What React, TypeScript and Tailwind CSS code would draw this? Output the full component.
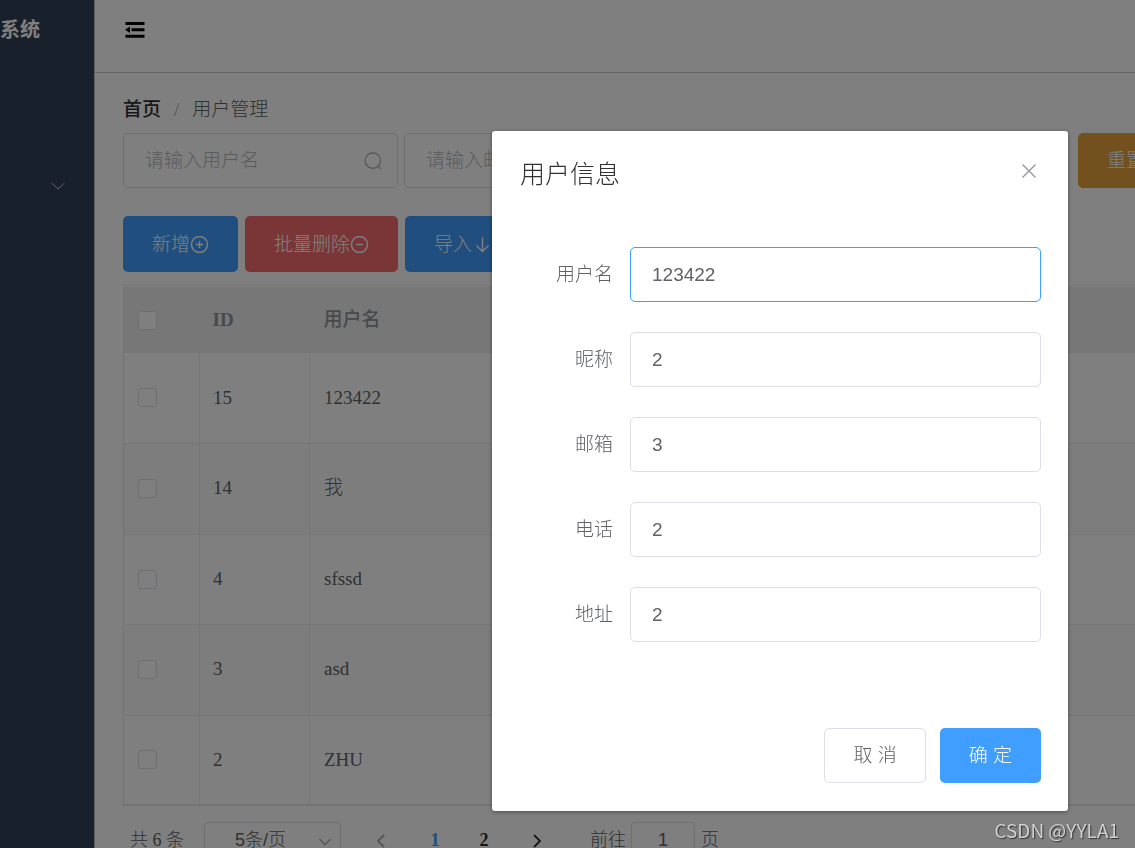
import React, { useState } from "react";

type User = { id: number; username: string };

const users: User[] = [
  { id: 15, username: "123422" },
  { id: 14, username: "我" },
  { id: 4, username: "sfssd" },
  { id: 3, username: "asd" },
  { id: 2, username: "ZHU" },
];

const fields = [
  { key: "username", label: "用户名" },
  { key: "nickname", label: "昵称" },
  { key: "email", label: "邮箱" },
  { key: "phone", label: "电话" },
  { key: "address", label: "地址" },
];

const sans = "font-['Liberation_Sans','Noto_Sans_CJK_SC',sans-serif]";
const button = `flex shrink-0 items-center rounded-[5px] px-[29px] pt-[2px] text-[19px] font-light text-white ${sans}`;

const Chevron = ({ d, className }: { d: string; className: string }) => (
  <svg viewBox="0 0 16 16" fill="none" stroke="currentColor" className={className}>
    <path d={d} />
  </svg>
);

const FoldIcon = () => (
  <svg viewBox="0 0 20 16" fill="currentColor" className="h-4 w-5">
    <path d="M0.5 0h19v3h-19zM6.5 6.2h13v3h-13zM0.5 12.7h19v3h-19zM0 7.7l5-3.2v6.4z" />
  </svg>
);

const SearchIcon = () => (
  <svg viewBox="0 0 18 18" fill="none" stroke="currentColor" strokeWidth="1.2" className="h-[18px] w-[18px]">
    <circle cx="8.8" cy="8.6" r="7.7" />
    <path d="M14 14.2l3 2.6" />
  </svg>
);

const CircleIcon = ({ plus }: { plus?: boolean }) => (
  <svg viewBox="0 0 19 19" fill="none" stroke="currentColor" strokeWidth="1.4" className="h-[19px] w-[19px]">
    <circle cx="9.5" cy="8.5" r="8" />
    <path d={plus ? "M6 8.5h7M9.5 5v7" : "M6 8.5h7"} />
  </svg>
);

const ArrowDownIcon = () => (
  <svg viewBox="0 0 19 19" fill="none" stroke="currentColor" strokeWidth="1.4" className="h-[19px] w-[19px]">
    <path d="M10.5 1.5v14M4.5 9.5l6 6 6-6" />
  </svg>
);

const Checkbox = ({ label }: { label: string }) => (
  <input
    type="checkbox"
    aria-label={label}
    className="block h-[19px] w-[19px] appearance-none rounded-[3px] border border-[#dcdfe6] bg-white checked:bg-[#409eff]"
  />
);

const SearchInput = ({ placeholder }: { placeholder: string }) => (
  <div className="flex h-[55px] w-[275px] shrink-0 items-center rounded-[5px] border border-[#dcdfe6] bg-white pl-[21px] pr-[15px] text-[#a8abb2]">
    <input
      aria-label={placeholder}
      placeholder={placeholder}
      className={`min-w-0 flex-1 pt-[2px] text-[19px] font-light outline-none placeholder:text-[#b4b8c0] ${sans}`}
    />
    <SearchIcon />
  </div>
);

const Sidebar = () => (
  <aside className="flex w-[95px] shrink-0 flex-col overflow-hidden border-r border-[#c0c4cc] bg-[#304156] text-white">
    <div className="flex h-[60px] items-center justify-end pr-[54px]">
      <b className={`whitespace-nowrap text-[20px] ${sans}`}>系统</b>
    </div>
    <button aria-label="展开菜单" className="mt-[90px] flex h-[72px] items-center justify-end pr-7 text-[#c0c4cc]">
      <Chevron d="M1.5 5l6.5 6 6.5-6" className="h-4 w-4" />
    </button>
  </aside>
);

const UserTable = () => (
  <div className="border-t border-[#ebeef5] pt-px">
    <table className="w-full table-fixed border-collapse text-left text-[19px] text-[#606266]">
      <thead>
        <tr className="h-[66px] border-l border-[#ebeef5] bg-[#eee] text-[#909399]">
          <th className="w-[76px] pl-[14px]">
            <Checkbox label="全选" />
          </th>
          <th className="w-[110px] px-[13px]">ID</th>
          <th className="px-[14px] font-medium">用户名</th>
        </tr>
      </thead>
      <tbody className="border-b-2 border-l border-[#e4e7ed]">
        {users.map((user) => (
          <tr key={user.id} className="h-[90px] even:h-[91px] even:bg-[#fafafa]">
            <td className="border-r border-b border-[#ebeef5] pl-[14px]">
              <Checkbox label={`选择 ${user.username}`} />
            </td>
            <td className="border-r border-b border-[#ebeef5] px-[13px]">{user.id}</td>
            <td className="border-b border-[#ebeef5] px-[14px] font-light">{user.username}</td>
          </tr>
        ))}
      </tbody>
    </table>
  </div>
);

const Pagination = () => (
  <div className="flex items-center pl-[7px] pt-4 text-[18px] font-light text-[#606266]">
    <span className="w-[74px]">共 6 条</span>
    <div className="relative">
      <select
        aria-label="每页条数"
        className={`h-[37px] w-[137px] appearance-none rounded-[4px] border border-[#dcdfe6] bg-white pl-[30px] text-[18px] font-light ${sans}`}
      >
        <option>5条/页</option>
        <option>10条/页</option>
      </select>
      <Chevron d="M2.5 5l5.5 5.5L13.5 5" className="pointer-events-none absolute right-2 top-3 h-4 w-4 stroke-[1.3] text-[#a8abb2]" />
    </div>
    <button aria-label="上一页" className="ml-8 text-[#a8abb2]">
      <Chevron d="M11 2L5 8l6 6" className="h-4 w-4 stroke-[1.8]" />
    </button>
    <button className="ml-[41px] w-[10px] font-bold text-[#409eff]">1</button>
    <button className="ml-[39px] w-[10px] font-bold text-[#303133]">2</button>
    <button aria-label="下一页" className="ml-10 text-[#303133]">
      <Chevron d="M5 2l6 6-6 6" className="h-4 w-4 stroke-[1.8]" />
    </button>
    <label htmlFor="page" className="ml-[45px]">前往</label>
    <input
      id="page"
      defaultValue="1"
      className={`ml-[5px] mr-[6px] h-[37px] w-[64px] rounded-[4px] border border-[#dcdfe6] text-center text-[18px] ${sans}`}
    />
    <span>页</span>
  </div>
);

const UserDialog = ({ onClose }: { onClose: () => void }) => {
  const [form, setForm] = useState<Record<string, string>>({
    username: "123422",
    nickname: "2",
    email: "3",
    phone: "2",
    address: "2",
  });

  return (
    <div className="fixed inset-0 flex items-start justify-end bg-black/50 pt-[131px] pr-[67px]">
      <div
        role="dialog"
        aria-labelledby="dialog-title"
        className="w-[576px] rounded-[3px] bg-white pr-[27px] pb-7 pl-7 shadow-[0_1px_4px_rgba(0,0,0,0.4)]"
      >
        <div className="flex h-[88px] items-center justify-between pr-1">
          <h2 id="dialog-title" className="text-[25px] font-light text-[#303133]">
            用户信息
          </h2>
          <button aria-label="关闭" onClick={onClose} className="pb-2 text-[#909399]">
            <Chevron d="M1.5 1.5l13 13M14.5 1.5l-13 13" className="h-4 w-4 stroke-[1.3]" />
          </button>
        </div>
        <form className="flex flex-col gap-[30px] pt-7">
          {fields.map(({ key, label }) => (
            <div key={key} className="flex items-center">
              <label
                htmlFor={key}
                className="w-[110px] pt-[2px] pr-[17px] text-right text-[19px] font-light text-[#606266]"
              >
                {label}
              </label>
              <input
                id={key}
                value={form[key]}
                onChange={(e) => setForm({ ...form, [key]: e.target.value })}
                className={`h-[55px] min-w-0 flex-1 rounded-[5px] border px-[21px] text-[19px] text-[#606266] outline-none ${sans} ${
                  key === "username" ? "border-[#409eff]" : "border-[#dcdfe6]"
                }`}
              />
            </div>
          ))}
        </form>
        <div className="flex justify-end gap-[14px] pt-[86px]">
          <button
            onClick={onClose}
            className={`h-[55px] rounded-[5px] border border-[#dcdfe6] px-7 pt-[2px] text-[19px] font-light text-[#606266] ${sans}`}
          >
            取 消
          </button>
          <button onClick={onClose} className={`${button} h-[55px] bg-[#409eff]`}>
            确 定
          </button>
        </div>
      </div>
    </div>
  );
};

export default function App() {
  const [open, setOpen] = useState(true);

  return (
    <div className="flex h-screen overflow-hidden bg-white font-['Liberation_Serif','Noto_Sans_CJK_SC',serif] text-[19px]">
      <Sidebar />
      <div className="min-w-0 flex-1 overflow-hidden">
        <header className="flex h-[73px] items-start border-b border-[#ccc] pt-[22px] pl-[30px]">
          <button aria-label="折叠菜单">
            <FoldIcon />
          </button>
        </header>
        <main className="pl-7">
          <nav className="flex h-[60px] items-center pt-[14px] text-[19px]">
            <a href="#" className="font-medium text-[#303133]">首页</a>
            <span className="px-[13px] font-light text-[#a8abb2]">/</span>
            <span className="font-light text-[#606266]">用户管理</span>
          </nav>
          <div className="flex gap-[6px]">
            <SearchInput placeholder="请输入用户名" />
            <SearchInput placeholder="请输入邮箱" />
            <SearchInput placeholder="请输入地址" />
            <button className={`${button} mr-3 h-[55px] w-[94px] justify-center bg-[#409eff]`} aria-label="搜索">
              <SearchIcon />
            </button>
            <button className={`${button} h-[55px] bg-[#e6a23c]`}>重置</button>
          </div>
          <div className="flex gap-[7px] pt-7 pb-[13px]">
            <button onClick={() => setOpen(true)} className={`${button} h-14 bg-[#409eff]`}>
              新增
              <CircleIcon plus />
            </button>
            <button className={`${button} h-14 bg-[#f56c6c]`}>
              批量删除
              <CircleIcon />
            </button>
            <button className={`${button} h-14 bg-[#409eff]`}>
              导入
              <ArrowDownIcon />
            </button>
          </div>
          <UserTable />
          <Pagination />
        </main>
      </div>
      {open && <UserDialog onClose={() => setOpen(false)} />}
      <p className="fixed right-4 bottom-1 font-['Noto_Sans_CJK_SC',sans-serif] text-[19px] leading-[28px] text-[#d0d0d0] [text-shadow:1px_1px_1px_#333]">
        CSDN @YYLA1
      </p>
    </div>
  );
}
